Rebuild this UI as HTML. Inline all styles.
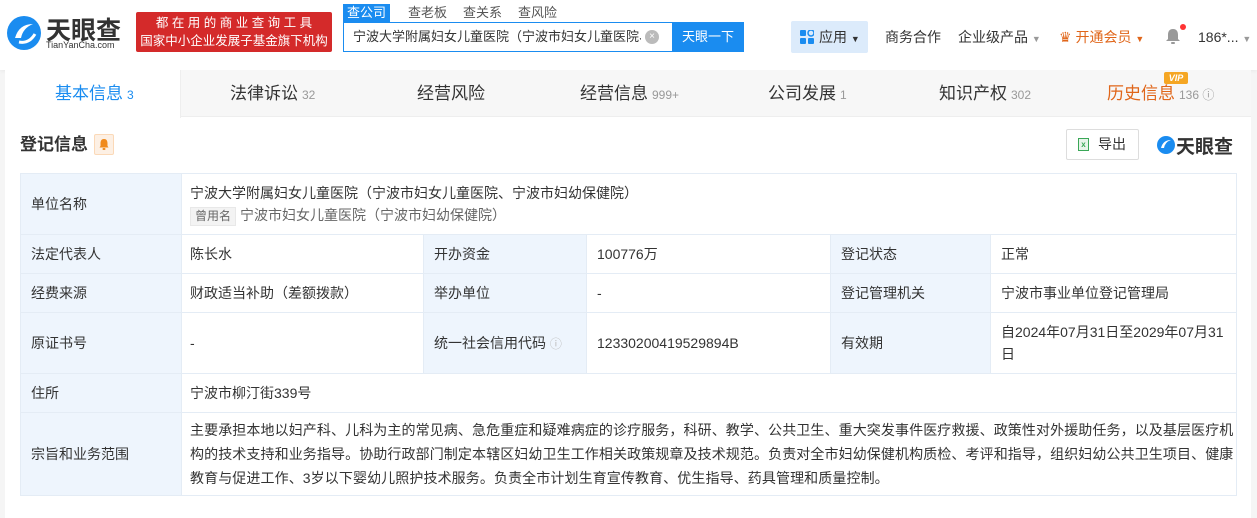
<!DOCTYPE html>
<html><head><meta charset="utf-8"><style>
*{margin:0;padding:0;box-sizing:border-box}
body{width:1257px;height:518px;background:#f5f5f5;font-family:"Liberation Sans","Noto Sans CJK SC",sans-serif;color:#333;position:relative;overflow:hidden;font-size:14px}
.hdr{position:absolute;left:0;top:0;width:1257px;height:70px;background:#fff;box-shadow:0 1px 4px rgba(0,0,0,.06)}
.abs{position:absolute;white-space:nowrap}
.card{position:absolute;left:5px;top:70px;width:1246px;height:448px;background:#fff}
.tabs{position:absolute;left:5px;top:70px;width:1246px;height:47px;background:#f7f7f7;border-bottom:1px solid #eee}
.tab{position:absolute;top:0;height:47px;line-height:47px;font-size:17px;color:#333}
.tab small{font-size:12px;color:#999;margin-left:4px}
table{position:absolute;left:20px;top:173px;border-collapse:collapse;width:1216px;font-size:14px;table-layout:fixed}
td{border:1px solid #e4ecf5;padding:0 10px;line-height:22px;vertical-align:middle;overflow:hidden}
td.l{background:#eef5fd;color:#333}
</style></head><body>
<div class="hdr"></div>
<svg class="abs" style="left:5px;top:14px" width="38" height="38" viewBox="0 0 38 38"><circle cx="19" cy="19" r="17" fill="#1a8cf0"/><path d="M10 24 Q14 10 28 10 Q18 14 16 24 Z" fill="#fff"/><path d="M14 28 Q24 30 30 20" stroke="#fff" stroke-width="3" fill="none"/></svg>
<div class="abs" style="left:46px;top:11px;font-size:25px;font-weight:bold;color:#333">天眼查</div>
<div class="abs" style="left:46px;top:40px;font-size:9px;color:#333">TianYanCha.com</div>
<div class="abs" style="left:136px;top:12px;width:196px;height:40px;background:#d42a2a;border-radius:2px;color:#fff;font-size:12.5px;line-height:18px;text-align:center;padding-top:2px">都 在 用 的 商 业 查 询 工 具<br>国家中小企业发展子基金旗下机构</div>
<div class="abs" style="left:343px;top:4px;width:47px;height:18px;background:#1a8cf0;color:#fff;font-size:13px;text-align:center;line-height:18px">查公司</div>
<div class="abs" style="left:408px;top:4px;font-size:13px;color:#555;line-height:18px">查老板</div>
<div class="abs" style="left:463px;top:4px;font-size:13px;color:#555;line-height:18px">查关系</div>
<div class="abs" style="left:518px;top:4px;font-size:13px;color:#555;line-height:18px">查风险</div>
<div class="abs" style="left:343px;top:22px;width:401px;height:30px;border:1px solid #1a8cf0;background:#fff"></div>
<div class="abs" style="left:353px;top:22px;line-height:30px;font-size:13px;color:#333;width:288px;overflow:hidden">宁波大学附属妇女儿童医院（宁波市妇女儿童医院、宁</div>
<div class="abs" style="left:645px;top:30px;width:14px;height:14px;border-radius:50%;background:#bbb;color:#fff;font-size:10px;text-align:center;line-height:14px">×</div>
<div class="abs" style="left:672px;top:22px;width:72px;height:30px;background:#1a8cf0;color:#fff;font-size:13px;text-align:center;line-height:30px">天眼一下</div>
<div class="abs" style="left:791px;top:21px;width:77px;height:32px;background:#dcebfb;border-radius:2px"></div>
<svg class="abs" style="left:800px;top:30px" width="14" height="14"><rect x="0" y="0" width="6" height="6" rx="1" fill="#1a8cf0"/><rect x="8" y="0" width="6" height="6" rx="3" fill="none" stroke="#1a8cf0" stroke-width="1.5"/><rect x="0" y="8" width="6" height="6" rx="1" fill="#1a8cf0"/><rect x="8" y="8" width="6" height="6" rx="1" fill="#1a8cf0"/></svg>
<div class="abs" style="left:819px;top:27px;font-size:14px;color:#333;line-height:20px">应用 <span style="font-size:9px">▼</span></div>
<div class="abs" style="left:885px;top:27px;font-size:14px;line-height:20px">商务合作</div>
<div class="abs" style="left:958px;top:27px;font-size:14px;line-height:20px">企业级产品 <span style="font-size:9px;color:#999">▼</span></div>
<div class="abs" style="left:1059px;top:27px;font-size:14px;line-height:20px;color:#e0661a">♛ 开通会员 <span style="font-size:9px">▼</span></div>
<svg class="abs" style="left:1165px;top:28px" width="16" height="17"><path d="M8 1 C4 1 3 4 3 7 L3 11 L1 13 L15 13 L13 11 L13 7 C13 4 12 1 8 1Z" fill="#999"/><rect x="6" y="14" width="4" height="2" rx="1" fill="#999"/></svg>
<div class="abs" style="left:1180px;top:24px;width:6px;height:6px;border-radius:50%;background:#f33"></div>
<div class="abs" style="left:1198px;top:27px;font-size:14px;line-height:20px">186*... <span style="font-size:9px;color:#999">▼</span></div>
<div class="card"></div>
<div class="tabs"></div>
<div class="abs" style="left:5px;top:70px;width:176px;height:48px;background:#fff;border-right:1px solid #eee"></div>
<div class="tab abs" style="left:55px;top:70px;color:#1a8cf0">基本信息<small style="color:#1a8cf0">3</small></div>
<div class="tab abs" style="left:230px;top:70px">法律诉讼<small>32</small></div>
<div class="tab abs" style="left:417px;top:70px">经营风险</div>
<div class="tab abs" style="left:580px;top:70px">经营信息<small>999+</small></div>
<div class="tab abs" style="left:768px;top:70px">公司发展<small>1</small></div>
<div class="tab abs" style="left:939px;top:70px">知识产权<small>302</small></div>
<div class="tab abs" style="left:1107px;top:70px;color:#e0661a">历史信息<small>136 ⓘ</small></div>
<div class="abs" style="left:1164px;top:72px;width:24px;height:12px;background:#f5a623;color:#fff;font-size:9px;font-weight:bold;font-style:italic;text-align:center;line-height:12px;border-radius:2px">VIP</div>
<div class="abs" style="left:20px;top:134px;font-size:17px;font-weight:bold;color:#333;line-height:22px">登记信息</div>
<div class="abs" style="left:94px;top:134px;width:20px;height:21px;background:#fdf0e4;border:1px solid #fbd9b8;border-radius:2px"></div>
<svg class="abs" style="left:99px;top:139px" width="10" height="11"><path d="M5 0 C2 0 1.5 2.5 1.5 4.5 L1.5 7 L0.5 8.5 L9.5 8.5 L8.5 7 L8.5 4.5 C8.5 2.5 8 0 5 0Z" fill="#f08a1c"/><rect x="3.5" y="9" width="3" height="2" rx="1" fill="#f08a1c"/></svg>
<div class="abs" style="left:1066px;top:129px;width:73px;height:31px;border:1px solid #ddd;border-radius:2px;background:#fff"></div>
<div class="abs" style="left:1078px;top:138px;width:11px;height:13px;background:#e8f4ea;border:1px solid #3aa757;color:#3aa757;font-size:8px;text-align:center;line-height:11px;font-weight:bold">x</div>
<div class="abs" style="left:1098px;top:134px;font-size:14px;line-height:20px">导出</div>
<svg class="abs" style="left:1156px;top:135px" width="20" height="20"><circle cx="10" cy="10" r="9" fill="#1a8cf0"/><path d="M5 13 Q7 5 15 5 Q9 7 8 13Z" fill="#fff"/></svg>
<div class="abs" style="left:1176px;top:132px;font-size:19px;font-weight:bold;color:#333">天眼查</div>
<table>
<colgroup><col style="width:161px"><col style="width:242px"><col style="width:163px"><col style="width:244px"><col style="width:160px"><col style="width:246px"></colgroup>
<tr style="height:61px"><td class="l">单位名称</td><td colspan="5" style="padding-left:8px">宁波大学附属妇女儿童医院（宁波市妇女儿童医院、宁波市妇幼保健院）<br><span style="display:inline-block;background:#f3f3f3;border:1px solid #e8e8e8;font-size:12px;color:#666;line-height:17px;padding:0 4px;margin-right:4px">曾用名</span><span style="color:#666">宁波市妇女儿童医院（宁波市妇幼保健院）</span></td></tr>
<tr style="height:39px"><td class="l">法定代表人</td><td style="padding-left:8px">陈长水</td><td class="l">开办资金</td><td>100776万</td><td class="l">登记状态</td><td>正常</td></tr>
<tr style="height:39px"><td class="l">经费来源</td><td style="padding-left:8px">财政适当补助（差额拨款）</td><td class="l">举办单位</td><td>-</td><td class="l">登记管理机关</td><td>宁波市事业单位登记管理局</td></tr>
<tr style="height:61px"><td class="l">原证书号</td><td style="padding-left:8px">-</td><td class="l">统一社会信用代码 <span style="color:#bbb;font-size:12px">ⓘ</span></td><td>12330200419529894B</td><td class="l">有效期</td><td style="white-space:nowrap">自2024年07月31日至2029年07月31<br>日</td></tr>
<tr style="height:39px"><td class="l">住所</td><td colspan="5" style="padding-left:8px">宁波市柳汀街339号</td></tr>
<tr style="height:83px"><td class="l">宗旨和业务范围</td><td colspan="5" style="line-height:24px;letter-spacing:0.1px;padding-left:8px;white-space:nowrap">主要承担本地以妇产科、儿科为主的常见病、急危重症和疑难病症的诊疗服务，科研、教学、公共卫生、重大突发事件医疗救援、政策性对外援助任务，以及基层医疗机<br>构的技术支持和业务指导。协助行政部门制定本辖区妇幼卫生工作相关政策规章及技术规范。负责对全市妇幼保健机构质检、考评和指导，组织妇幼公共卫生项目、健康<br>教育与促进工作、3岁以下婴幼儿照护技术服务。负责全市计划生育宣传教育、优生指导、药具管理和质量控制。</td></tr>
</table>
</body></html>
